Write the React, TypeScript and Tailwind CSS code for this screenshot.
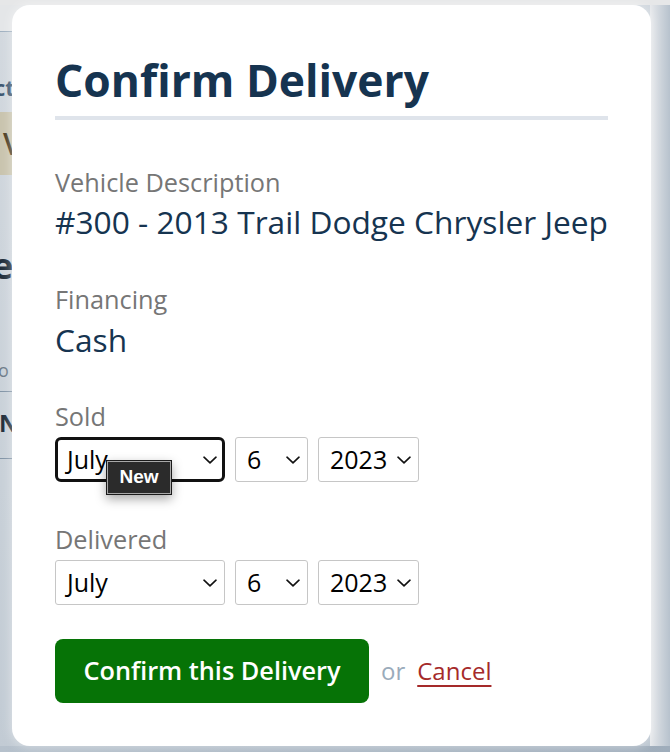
import React from "react";

function Chevron() {
  return (
    <svg width="14" height="8" viewBox="0 0 14 8" fill="none" className="shrink-0">
      <path d="M1 1.2L7 6.8L13 1.2" stroke="#111" strokeWidth="1.6" strokeLinecap="round" strokeLinejoin="round" />
    </svg>
  );
}

function Select({ value, w, focused }: { value: string; w: string; focused?: boolean }) {
  return (
    <div
      className={
        "flex h-[45px] items-center justify-between bg-white text-[25px] text-black " +
        w +
        (focused
          ? " rounded-[6px] border-[3px] border-[#111] pl-[9px] pr-[5px]"
          : " rounded-[3px] border border-[#c6c6c6] pl-[11px] pr-[7px]")
      }
    >
      <span className="leading-none">{value}</span>
      <Chevron />
    </div>
  );
}

export default function App() {
  const font = { fontFamily: '"Open Sans", "Noto Sans", sans-serif' };
  return (
    <div className="relative h-[752px] w-[670px] overflow-hidden bg-gradient-to-b from-[#cfd6dd] to-[#b9c4cf]" style={font}>
      {/* dimmed page behind */}
      <div className="flex h-full w-[40px] flex-col bg-gradient-to-b from-[#d3d9df] to-[#c2cbd4]">
        <div className="h-[31px] bg-[#e4e6e8]" />
        <div className="h-[1px] bg-[#9fb0c0]" />
        <div className="mt-[42px] -ml-[6px] text-[22px] font-bold leading-[26px] text-[#3c5670]">ct</div>
        <div className="mt-[12px] flex h-[63px] items-center bg-[#c9c4ae] pl-[3px] text-[30px] font-semibold text-[#4a3c22]">V</div>
        <div className="mt-[71px] -ml-[8px] text-[36px] font-bold leading-[40px] text-[#1f2d3a]">e</div>
        <div className="mt-[73px] -ml-[2px] text-[18px] leading-[22px] text-[#6b7a88]">o</div>
        <div className="mt-[10px] h-[1px] bg-[#8294a6]" />
        <div className="mt-[18px] -ml-[1px] text-[24px] font-bold leading-[26px] text-[#1f2d3a]">No</div>
        <div className="mt-[22px] h-[1px] bg-[#8294a6]" />
      </div>
      <div className="absolute right-0 top-0 h-full w-[20px] bg-gradient-to-r from-[#e6e8eb] to-[#b7c2cd]" />
      <div className="absolute left-0 top-0 h-[5px] w-full bg-[#e6e7e8]" />
      <div className="absolute bottom-0 left-0 h-[6px] w-full bg-gradient-to-r from-[#b6c1cc] to-[#9fadbb]" />

      {/* modal */}
      <div className="absolute left-[12px] top-[5px] h-[741px] w-[639px] rounded-[18px] bg-white px-[43px] shadow-[0_0_12px_rgba(255,255,255,0.5)]">
        <h1 className="pt-[48px] text-[44.4px] font-bold leading-[54px] text-[#163450]">Confirm Delivery</h1>
        <div className="mt-[9px] h-[4px] bg-[#dfe4eb]" />

        <div className="mt-[45px] text-[25.3px] leading-[34px] text-[#767676]">Vehicle Description</div>
        <div className="mt-[1px] text-[31.7px] leading-[44px] text-[#163450]">#300 - 2013 Trail Dodge Chrysler Jeep</div>

        <div className="mt-[38px] text-[25.3px] leading-[34px] text-[#767676]">Financing</div>
        <div className="mt-[2px] text-[31.7px] leading-[44px] text-[#163450]">Cash</div>

        <div className="mt-[37px] text-[25.3px] leading-[34px] text-[#767676]">Sold</div>
        <div className="relative mt-[4px] flex gap-[10px]">
          <Select value="July" w="w-[170px]" focused />
          <Select value="6" w="w-[73px]" />
          <Select value="2023" w="w-[101px]" />
          <div
            className="absolute left-[51px] top-[23px] flex h-[35px] w-[66px] items-center justify-center border border-[#1a1a1a] bg-[#2b2b2b] text-[19px] font-bold text-white shadow-[inset_0_0_0_1px_#a8a8a8,0_4px_10px_rgba(0,0,0,0.35)]"
            style={{ fontFamily: '"Liberation Sans", Arial, sans-serif' }}
          >
            New
          </div>
        </div>

        <div className="mt-[40px] text-[25.3px] leading-[34px] text-[#767676]">Delivered</div>
        <div className="mt-[4px] flex gap-[10px]">
          <Select value="July" w="w-[170px]" />
          <Select value="6" w="w-[73px]" />
          <Select value="2023" w="w-[101px]" />
        </div>

        <div className="mt-[34px] flex items-center">
          <button className="flex h-[64px] w-[314px] items-center justify-center rounded-[8px] bg-[#067306] text-[25.3px] font-semibold text-white">
            Confirm this Delivery
          </button>
          <span className="ml-[12px] text-[24px] text-[#9aabbb]">or</span>
          <span className="ml-[12px] text-[24px] text-[#a52a2a] underline decoration-[2px] underline-offset-[5px]">Cancel</span>
        </div>
      </div>
    </div>
  );
}
